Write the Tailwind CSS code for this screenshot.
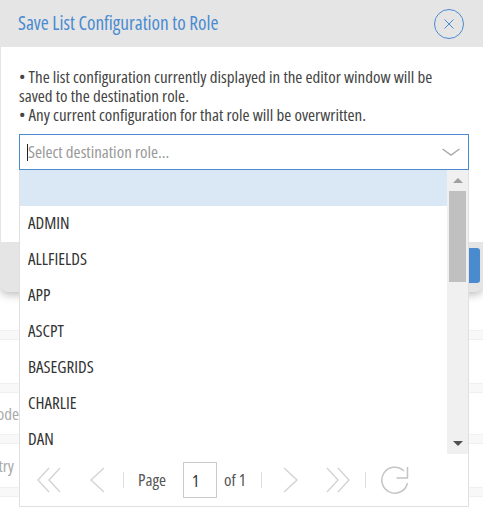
<!DOCTYPE html>
<html lang="en">
<head>
    <meta charset="UTF-8">
    <title>Save List Configuration to Role</title>
    <script src="https://cdn.jsdelivr.net/npm/@tailwindcss/browser@4"></script>
</head>
<body class="bg-white font-['Open_Sans','Noto_Sans',sans-serif] font-stretch-[75%] text-[#333]">
    <div class="relative w-[483px] h-[512px] overflow-hidden">

        <!-- page behind the modal -->
        <div class="pt-[338px] text-[17px] leading-[20px] text-[#aaa]">
            <div class="h-[10px] mt-[-8px] bg-[#f8f8f8] border-y border-[#f0f0f0]"></div>
            <div class="h-[10px] mt-[43px] bg-[#f8f8f8] border-y border-[#f0f0f0]"></div>
            <div class="h-[41px] flex items-center justify-end w-[19px] overflow-hidden">ode</div>
            <div class="h-[10px] bg-[#f8f8f8] border-y border-[#f0f0f0]"></div>
            <div class="h-[43px] flex items-center justify-end w-[14px] overflow-hidden">try</div>
            <div class="h-[10px] bg-[#f8f8f8] border-y border-[#f0f0f0]"></div>
        </div>

        <!-- modal -->
        <div class="absolute left-0 top-0 w-[483px] h-[292px] flex flex-col rounded-b-[8px] bg-[#e5e5e5] shadow-[0_3px_8px_rgba(0,0,0,0.25)]">
            <div class="h-[47px] shrink-0 flex items-center justify-between pl-[18px] pr-[19px]">
                <span class="text-[19.3px] text-[#4a8bd0]">Save List Configuration to Role</span>
                <span class="w-[30px] h-[30px] rounded-full border border-[#4a8bd0] flex items-center justify-center">
                    <svg width="12" height="12" viewBox="0 0 12 12" fill="none" stroke="#4a8bd0" stroke-width="1"><path d="M1.5 1.5L10.5 10.5M10.5 1.5L1.5 10.5"/></svg>
                </span>
            </div>
            <div class="h-[195px] shrink-0 ml-[1px] bg-white pl-[18px] pr-[18px] pt-[20px] text-[17px] leading-[19px] text-[#444]">
                <p>• The list configuration currently displayed in the editor window will be<br>saved to the destination role.<br>• Any current configuration for that role will be overwritten.</p>
            </div>
            <div class="flex-1 flex justify-end items-start pt-[6px] pr-[3px]">
                <span class="w-[40px] h-[35px] rounded-[3px] bg-[#4a8bd0]"></span>
            </div>
        </div>

        <!-- combo box and open dropdown -->
        <div class="absolute left-[19px] top-[134px] w-[450px]">
            <div class="h-[36px] border border-[#4a8bd0] bg-white flex items-center justify-between pl-[7px] pr-[8px]">
                <div class="flex items-center">
                    <span class="w-[1px] h-[17px] bg-[#222]"></span>
                    <span class="text-[17px] text-[#999]">Select destination role...</span>
                </div>
                <svg width="18" height="8" viewBox="0 0 18 8" fill="none" stroke="#aaa" stroke-width="1.5"><path d="M0.5 1L9 7L17.5 1"/></svg>
            </div>
            <div class="h-[337px] bg-white border-x border-b border-[#e0e0e0] flex flex-col">
                <div class="h-[284px] flex">
                    <ul class="flex-1 overflow-hidden text-[17px] text-[#333]">
                        <li class="h-[36px] bg-[#dae7f5]"></li>
                        <li class="h-[36px] leading-[34px] pl-[8px]">ADMIN</li>
                        <li class="h-[36px] leading-[34px] pl-[8px]">ALLFIELDS</li>
                        <li class="h-[36px] leading-[34px] pl-[8px]">APP</li>
                        <li class="h-[36px] leading-[34px] pl-[8px]">ASCPT</li>
                        <li class="h-[36px] leading-[34px] pl-[8px]">BASEGRIDS</li>
                        <li class="h-[36px] leading-[34px] pl-[8px]">CHARLIE</li>
                        <li class="h-[36px] leading-[34px] pl-[8px]">DAN</li>
                    </ul>
                    <div class="w-[21px] bg-[#f0f0f0] flex flex-col items-center">
                        <div class="h-[21px] flex items-center"><div class="border-x-[5px] border-x-transparent border-b-[5px] border-b-[#a0a0a0]"></div></div>
                        <div class="w-[17px] h-[91px] bg-[#c0c0c0]"></div>
                        <div class="mt-auto h-[21px] flex items-center"><div class="border-x-[5px] border-x-transparent border-t-[5px] border-t-[#505050]"></div></div>
                    </div>
                </div>
                <div class="flex-1 flex items-center pl-[17px] text-[17px] text-[#555] whitespace-nowrap">
                    <svg width="24" height="26" viewBox="0 0 24 26" fill="none" stroke="#d5d5d5" stroke-width="1.5"><path d="M12 1L1 13L12 25M23 1L12 13L23 25"/></svg>
                    <svg class="ml-[28px]" width="16" height="26" viewBox="0 0 16 26" fill="none" stroke="#d5d5d5" stroke-width="1.5"><path d="M15 1L2 13L15 25"/></svg>
                    <span class="ml-[18px] w-[1px] h-[16px] bg-[#ddd]"></span>
                    <span class="ml-[14px] w-[28px]">Page</span>
                    <span class="ml-[17px] w-[34px] h-[36px] border border-[#ccc] pl-[8px] leading-[36px] text-[#333]">1</span>
                    <span class="ml-[7px] w-[22px]">of 1</span>
                    <span class="ml-[15px] w-[1px] h-[16px] bg-[#ddd]"></span>
                    <svg class="ml-[21px]" width="16" height="26" viewBox="0 0 16 26" fill="none" stroke="#d5d5d5" stroke-width="1.5"><path d="M1 1L14 13L1 25"/></svg>
                    <svg class="ml-[27px]" width="24" height="26" viewBox="0 0 24 26" fill="none" stroke="#d5d5d5" stroke-width="1.5"><path d="M1 1L12 13L1 25M12 1L23 13L12 25"/></svg>
                    <span class="ml-[15px] w-[1px] h-[16px] bg-[#ddd]"></span>
                    <svg class="ml-[15px]" width="28" height="28" viewBox="0 0 28 28" fill="none" stroke="#c4c4c4" stroke-width="1.5"><path d="M26.5 17A13 13 0 1 1 23 5M26.5 1V12H15.5"/></svg>
                </div>
            </div>
        </div>
    </div>
</body>
</html>
